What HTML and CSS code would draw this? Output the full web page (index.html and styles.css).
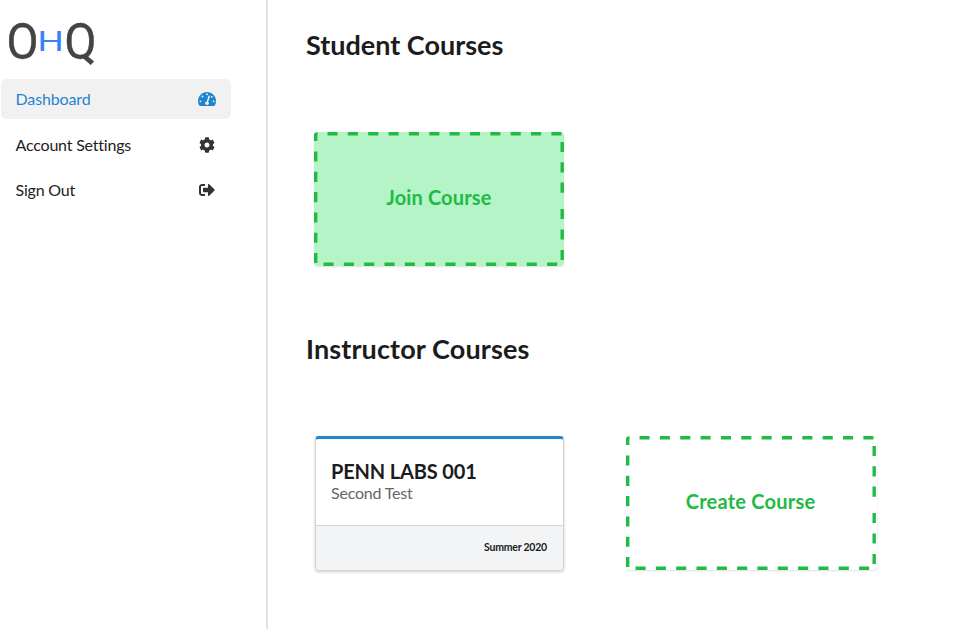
FILE: index.html
```html
<!DOCTYPE html>
<html lang="en">
<head>
<meta charset="utf-8">
<title>OHQ Dashboard</title>
<link rel="stylesheet" href="styles.css">
</head>
<body>
<svg width="0" height="0" class="defs">
  <symbol id="dashes" viewBox="0 0 250 134">
    <g fill="none" stroke="#21ba45" stroke-width="3.4">
      <path d="M0 1.7H248" stroke-dasharray="10.1 10.25" stroke-dashoffset="6.85"/>
      <path d="M0 132.2H250" stroke-dasharray="10.1 10.22" stroke-dashoffset="10.8"/>
      <path d="M1.7 1V131" stroke-dasharray="8 10.5 10.1 10.2 10.1 10.2 10.1 10.2 10.1 10.2 10.1 10.2 10.1 20"/>
      <path d="M248.2 10V134" stroke-dasharray="10.1 10.2 10.1 10.2 10.1 16.3 10.1 10.3 10.1 10.4 10.1 20"/>
    </g>
  </symbol>
</svg>
<div class="app">
  <aside class="sidebar">
    <svg class="logo" width="110" height="60" viewBox="0 0 110 60" role="img" aria-label="OHQ">
      <text class="logo-dark" transform="translate(6.5 48.6) scale(.93 1)">O</text>
      <text class="logo-blue" transform="translate(37.6 40.7) scale(1.34 1)">H</text>
      <text class="logo-dark" transform="translate(64.6 48.6) scale(.93 1)">Q</text>
    </svg>
    <nav class="menu">
      <a class="item active"><span>Dashboard</span>
        <svg width="18" height="16" viewBox="0 0 576 512"><path fill="currentColor" d="M288 32C129 32 0 161 0 320c0 53 14 102 39 145 6 9 16 15 27 15h444c11 0 21-6 27-15 25-43 39-92 39-145C576 161 447 32 288 32z"/><g fill="#f1f1f1"><circle cx="288" cy="105" r="30"/><circle cx="144" cy="176" r="30"/><circle cx="78" cy="330" r="30"/><circle cx="498" cy="330" r="30"/><circle cx="440" cy="184" r="28"/><circle cx="288" cy="390" r="58"/></g><path d="M288 380L358 168" stroke="#f1f1f1" stroke-width="48" stroke-linecap="round"/></svg>
      </a>
      <a class="item settings"><span>Account Settings</span>
        <svg width="16" height="16" viewBox="0 0 512 512"><path fill="currentColor" d="M487.4 315.7l-42.6-24.6c4.3-23.2 4.3-47 0-70.2l42.6-24.6c4.9-2.8 7.1-8.6 5.5-14-11.1-35.6-30-67.8-54.7-94.6-3.8-4.1-10-5.1-14.8-2.3L380.8 110c-17.9-15.4-38.5-27.3-60.8-35.1V25.8c0-5.6-3.9-10.5-9.4-11.7-36.7-8.2-74.3-7.8-109.2 0-5.5 1.2-9.4 6.1-9.4 11.7V75c-22.2 7.9-42.8 19.8-60.8 35.1L88.7 85.5c-4.9-2.8-11-1.9-14.8 2.3-24.7 26.7-43.6 58.9-54.7 94.6-1.7 5.4.6 11.2 5.5 14L67.3 221c-4.3 23.2-4.3 47 0 70.2l-42.6 24.6c-4.9 2.8-7.1 8.6-5.5 14 11.1 35.6 30 67.8 54.7 94.6 3.8 4.1 10 5.1 14.8 2.3l42.6-24.6c17.9 15.4 38.5 27.3 60.8 35.1v49.2c0 5.6 3.9 10.5 9.4 11.7 36.7 8.2 74.3 7.8 109.2 0 5.5-1.2 9.4-6.1 9.4-11.7v-49.2c22.2-7.9 42.8-19.8 60.8-35.1l42.6 24.6c4.9 2.8 11 1.9 14.8-2.3 24.7-26.7 43.6-58.9 54.7-94.6 1.5-5.5-.7-11.3-5.6-14.1zM256 336c-44.1 0-80-35.9-80-80s35.9-80 80-80 80 35.9 80 80-35.9 80-80 80z"/></svg>
      </a>
      <a class="item"><span>Sign Out</span>
        <svg width="16" height="16" viewBox="0 0 512 512"><path fill="currentColor" d="M497 273L329 441c-15 15-41 4.5-41-17v-96H152c-13.3 0-24-10.7-24-24v-96c0-13.3 10.7-24 24-24h136V88c0-21.4 25.9-32 41-17l168 168c9.3 9.4 9.3 24.6 0 34zM192 436v-40c0-6.6-5.4-12-12-12H96c-17.7 0-32-14.3-32-32V160c0-17.7 14.3-32 32-32h84c6.6 0 12-5.4 12-12V76c0-6.6-5.4-12-12-12H96c-53 0-96 43-96 96v192c0 53 43 96 96 96h84c6.6 0 12-5.4 12-12z"/></svg>
      </a>
    </nav>
  </aside>
  <main class="main">
    <section class="section">
      <h1>Student Courses</h1>
      <div class="cards">
        <div class="card dashed filled"><svg class="outline"><use href="#dashes"/></svg><span>Join Course</span></div>
      </div>
    </section>
    <section class="section instructor">
      <h1>Instructor Courses</h1>
      <div class="cards">
        <div class="card course">
          <div class="course-body">
            <h2>PENN LABS 001</h2>
            <p>Second Test</p>
          </div>
          <div class="course-foot">Summer 2020</div>
        </div>
        <div class="card dashed create"><svg class="outline"><use href="#dashes"/></svg><span>Create Course</span></div>
      </div>
    </section>
  </main>
</div>
</body>
</html>
```
FILE: styles.css
```css
* { box-sizing: border-box; }
body { margin: 0; background: #fff; color: #1b1c1d; font-family: Lato, "Liberation Sans", sans-serif; overflow: hidden; }
h1, h2, p { margin: 0; }
.defs { position: absolute; }
.app { display: flex; height: 629px; }
.sidebar { width: 268px; flex: none; border-right: 2px solid #e2e2e3; padding: 10px 0 0 1px; }
.logo { display: block; margin-left: -1px; overflow: visible; }
.logo-dark { font: 400 50px Roboto, sans-serif; fill: #444; stroke: #444; stroke-width: .5; }
.logo-blue { font: 400 27.5px Roboto, sans-serif; fill: #3c80f6; }
.menu { display: flex; flex-direction: column; gap: 5.6px; width: 230px; margin-top: 9px; }
.item { display: flex; align-items: center; justify-content: space-between; height: 40px; padding: 0 16px 0 14.5px; border-radius: 5px; font-size: 16px; letter-spacing: -.2px; color: #1f2021; }
.item span { padding-bottom: 2px; }
.item.settings span { padding-bottom: 0; }
.item svg { display: block; color: #333; flex: none; }
.item.active { background: #f1f1f1; color: #1e84d0; letter-spacing: -.13px; }
.item.active svg { color: #1e84d0; margin-right: -1px; }
.main { flex: 1; padding-left: 38px; }
.section { height: 304px; padding-top: 28px; }
.section h1 { font-size: 27px; line-height: 34px; font-weight: 700; }
.instructor h1 { letter-spacing: .12px; }
.cards { display: grid; grid-template-columns: 250px 250px; column-gap: 62.3px; margin: 70px 0 0 8.4px; }
.card { height: 134px; border-radius: 4px; }
.dashed { position: relative; display: flex; align-items: center; justify-content: center; padding-bottom: 4px; color: #21ba45; font-size: 20px; letter-spacing: .15px; font-weight: 700; overflow: hidden; box-shadow: 0 1px 2px #dedfdf; }
.create { padding-right: 2px; letter-spacing: .22px; margin-left: -.3px; }
.outline { position: absolute; inset: 0; width: 250px; height: 134px; }
.filled { background: #b5f4c6; padding-right: 1px; }
.course { width: 249px; height: 135px; margin: 0 0 0 .6px; display: flex; flex-direction: column; border: 1px solid #d4d4d5; border-top: 3px solid #2185d0; box-shadow: 0 1px 3px #c9cacb; overflow: hidden; }
.course-body { height: 86px; padding: 20px 15px 0; }
.course h2 { font-size: 20px; line-height: 24px; letter-spacing: -.15px; }
.course p { font-size: 16px; line-height: 20px; letter-spacing: -.2px; color: #666; }
.course-foot { flex: 1; border-top: 1px solid #d4d4d5; background: #f3f4f5; padding: 14px 16px 0; text-align: right; font-size: 10.5px; letter-spacing: -.22px; line-height: 14px; font-weight: 700; }
```
